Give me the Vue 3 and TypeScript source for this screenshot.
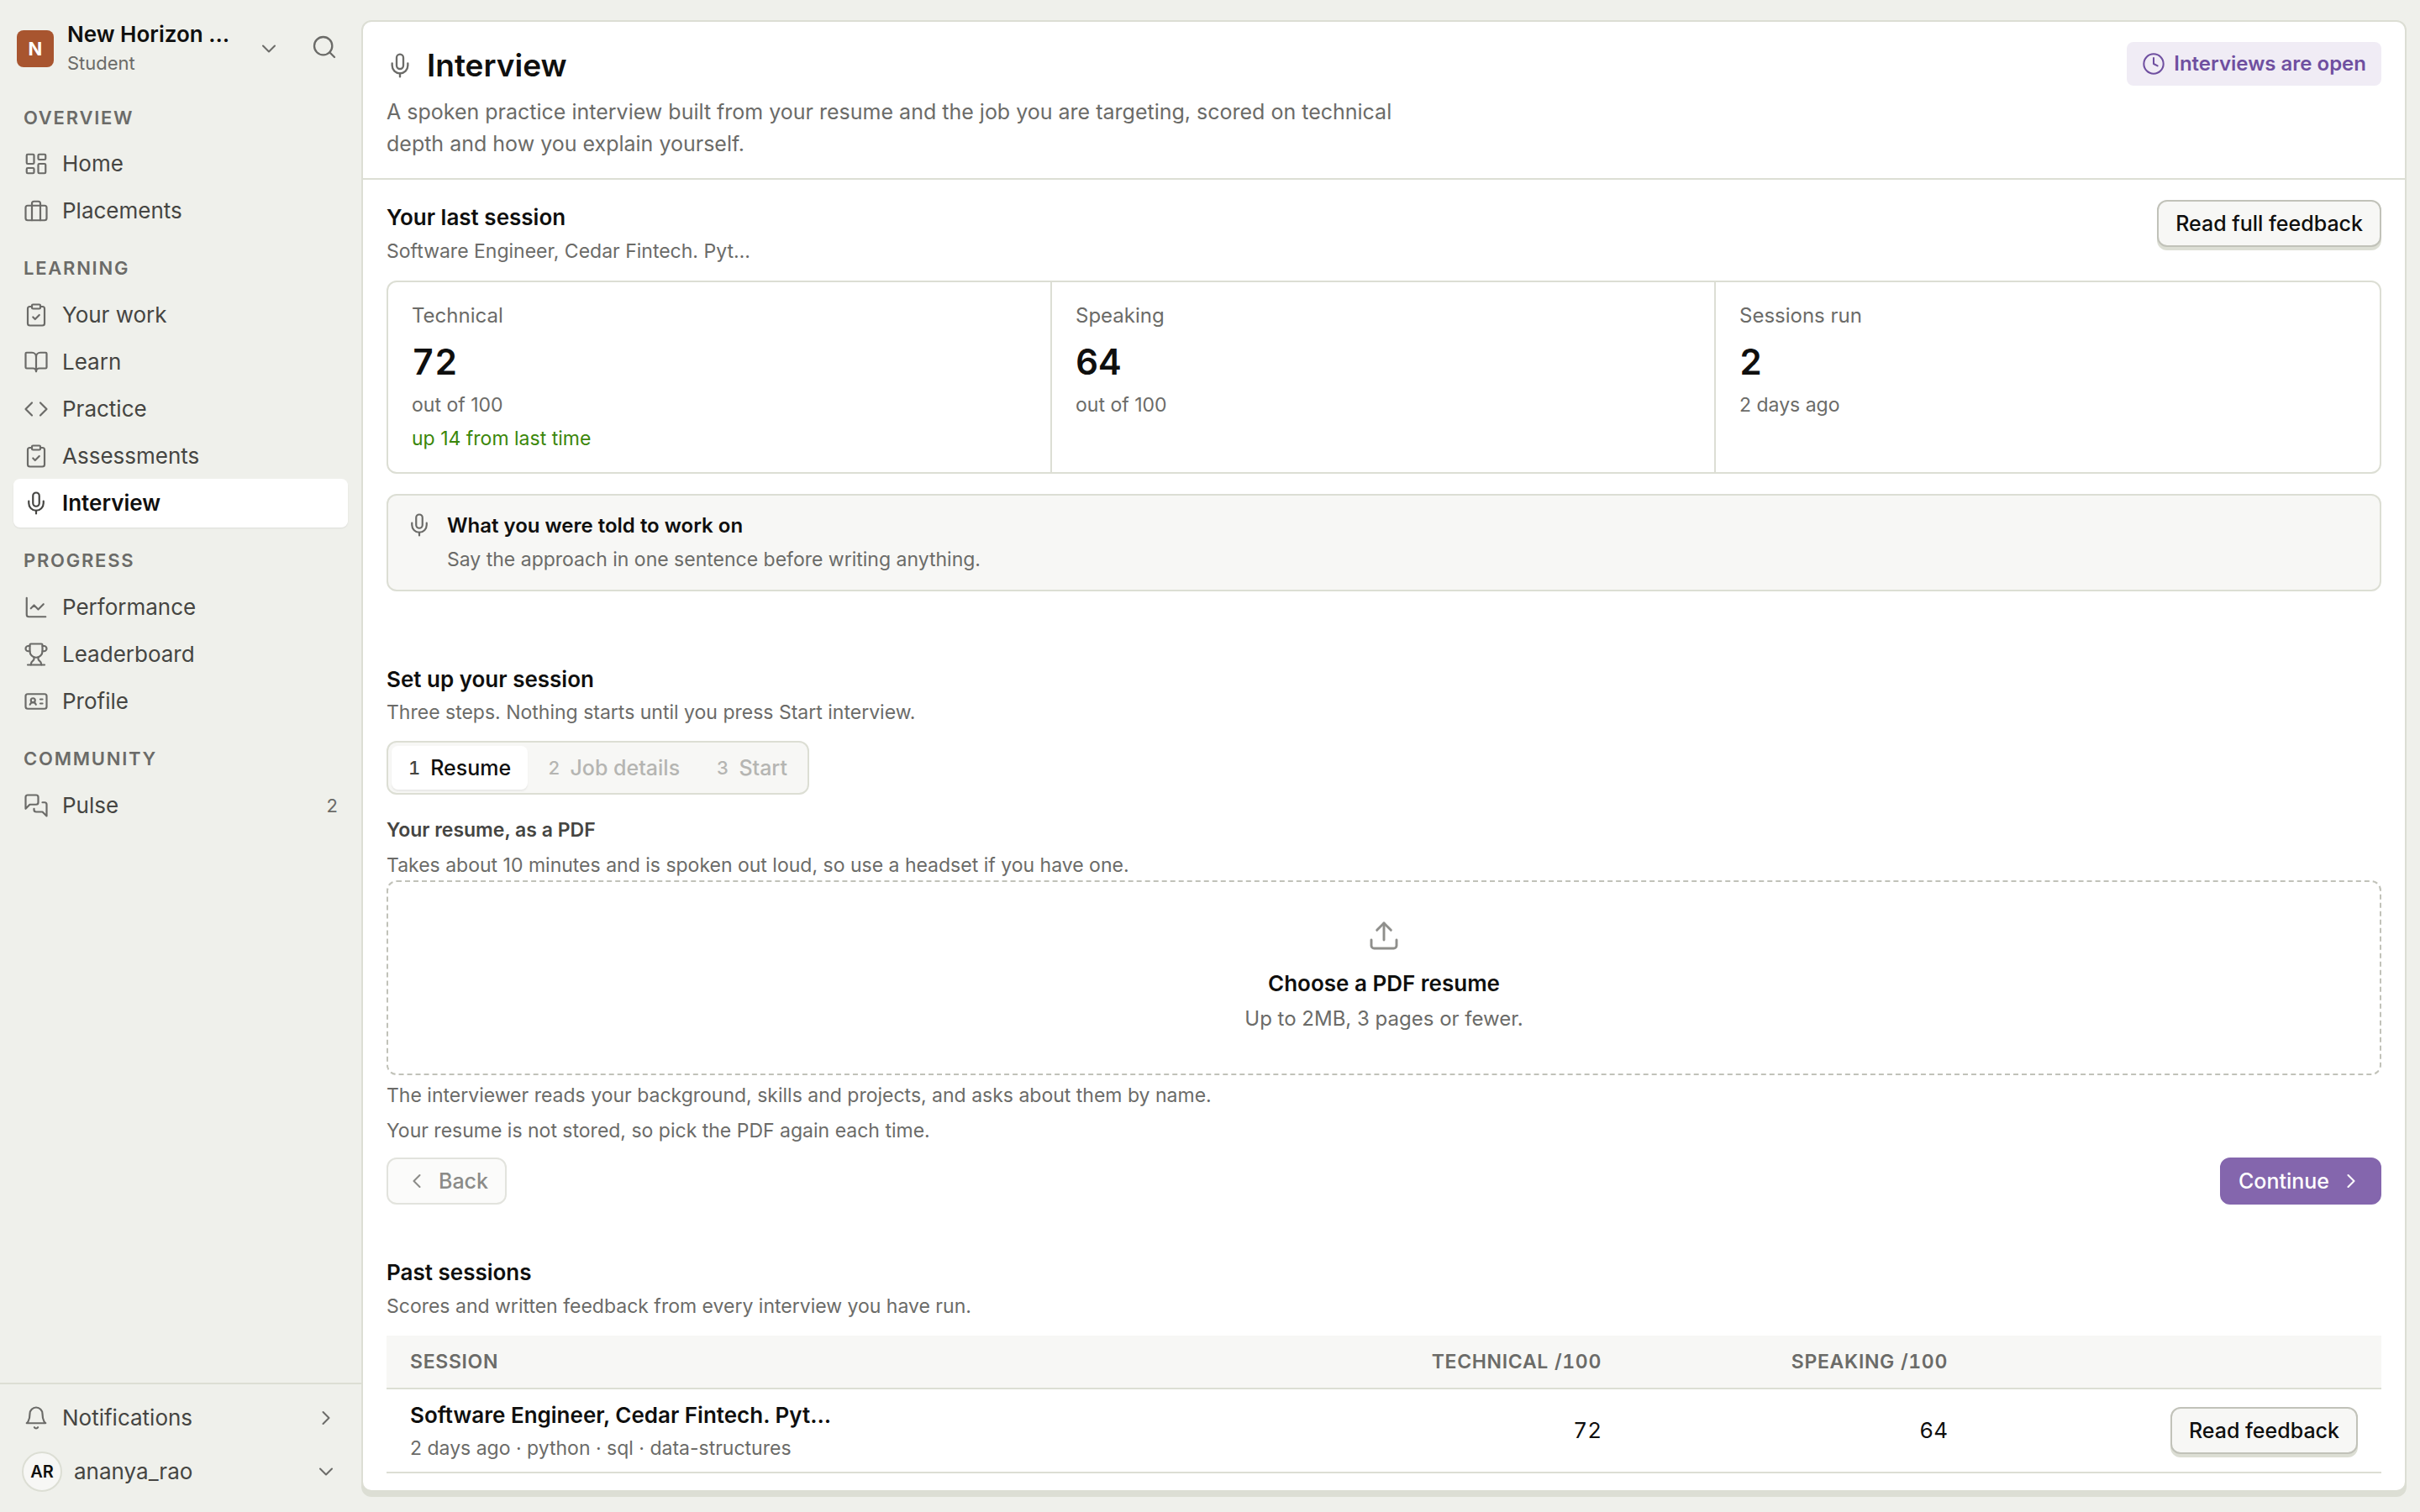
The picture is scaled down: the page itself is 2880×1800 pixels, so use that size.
<script setup lang="ts">
import { h, ref } from 'vue'
import type { FunctionalComponent } from 'vue'

type Shape = [tag: string, attrs: Record<string, string | number>]

const p = (d: string): Shape => ['path', { d }]
const r = (x: number, y: number, width: number, height: number, rx: number): Shape => [
  'rect',
  { x, y, width, height, rx },
]
const c = (cx: number, cy: number, radius: number): Shape => ['circle', { cx, cy, r: radius }]

const clipboard: Shape[] = [
  r(8, 2, 8, 4, 1),
  p('M16 4h2a2 2 0 0 1 2 2v14a2 2 0 0 1-2 2H6a2 2 0 0 1-2-2V6a2 2 0 0 1 2-2h2'),
  p('m9 14 2 2 4-4'),
]

const shapes: Record<string, Shape[]> = {
  home: [r(3, 3, 7, 9, 1), r(14, 3, 7, 5, 1), r(14, 12, 7, 9, 1), r(3, 16, 7, 5, 1)],
  briefcase: [
    r(2, 7, 20, 14, 2),
    p('M16 21V5a2 2 0 0 0-2-2h-4a2 2 0 0 0-2 2v16'),
  ],
  clipboard,
  book: [
    p('M12 7v14'),
    p('M3 18a1 1 0 0 1-1-1V4a1 1 0 0 1 1-1h5a4 4 0 0 1 4 4 4 4 0 0 1 4-4h5a1 1 0 0 1 1 1v13a1 1 0 0 1-1 1h-6a3 3 0 0 0-3 3 3 3 0 0 0-3-3z'),
  ],
  code: [p('m16 18 6-6-6-6'), p('m8 6-6 6 6 6')],
  mic: [p('M12 19v3'), p('M19 10v2a7 7 0 0 1-14 0v-2'), r(9, 2, 6, 13, 3)],
  chart: [p('M3 3v16a2 2 0 0 0 2 2h16'), p('m19 9-5 5-4-4-3 3')],
  trophy: [
    p('M10 14.66v1.626a2 2 0 0 1-.976 1.696A5 5 0 0 0 7 21.978'),
    p('M14 14.66v1.626a2 2 0 0 0 .976 1.696A5 5 0 0 1 17 21.978'),
    p('M18 9h1.5a1 1 0 0 0 0-5H18'),
    p('M4 22h16'),
    p('M6 9a6 6 0 0 0 12 0V3a1 1 0 0 0-1-1H7a1 1 0 0 0-1 1z'),
    p('M6 9H4.5a1 1 0 0 1 0-5H6'),
  ],
  card: [
    p('M16 10h2'),
    p('M16 14h2'),
    p('M6.17 15a3 3 0 0 1 5.66 0'),
    c(9, 11, 2),
    r(2, 5, 20, 14, 2),
  ],
  chat: [
    p('M14 9a2 2 0 0 1-2 2H6l-4 4V4a2 2 0 0 1 2-2h8a2 2 0 0 1 2 2z'),
    p('M18 9h2a2 2 0 0 1 2 2v11l-4-4h-6a2 2 0 0 1-2-2v-1'),
  ],
  bell: [p('M6 8a6 6 0 0 1 12 0c0 7 3 9 3 9H3s3-2 3-9'), p('M10.3 21a1.94 1.94 0 0 0 3.4 0')],
  clock: [c(12, 12, 10), p('M12 6v6l4 2')],
  search: [c(11, 11, 8), p('m21 21-4.3-4.3')],
  upload: [p('M12 3v12'), p('m17 8-5-5-5 5'), p('M21 15v4a2 2 0 0 1-2 2H5a2 2 0 0 1-2-2v-4')],
  down: [p('m6 9 6 6 6-6')],
  right: [p('m9 18 6-6-6-6')],
  left: [p('m15 18-6-6 6-6')],
}

const Icon: FunctionalComponent<{ name: string; size?: number }> = (props) =>
  h(
    'svg',
    {
      width: props.size ?? 30,
      height: props.size ?? 30,
      viewBox: '0 0 24 24',
      fill: 'none',
      stroke: 'currentColor',
      'stroke-width': 1.75,
      'stroke-linecap': 'round',
      'stroke-linejoin': 'round',
      'aria-hidden': 'true',
    },
    shapes[props.name].map(([tag, attrs]) => h(tag, attrs)),
  )
Icon.props = ['name', 'size']

interface NavItem {
  label: string
  icon: string
  count?: number
}

const groups: { title: string; items: NavItem[] }[] = [
  {
    title: 'Overview',
    items: [
      { label: 'Home', icon: 'home' },
      { label: 'Placements', icon: 'briefcase' },
    ],
  },
  {
    title: 'Learning',
    items: [
      { label: 'Your work', icon: 'clipboard' },
      { label: 'Learn', icon: 'book' },
      { label: 'Practice', icon: 'code' },
      { label: 'Assessments', icon: 'clipboard' },
      { label: 'Interview', icon: 'mic' },
    ],
  },
  {
    title: 'Progress',
    items: [
      { label: 'Performance', icon: 'chart' },
      { label: 'Leaderboard', icon: 'trophy' },
      { label: 'Profile', icon: 'card' },
    ],
  },
  { title: 'Community', items: [{ label: 'Pulse', icon: 'chat', count: 2 }] },
]
const current = ref('Interview')

const stats = [
  { label: 'Technical', value: 72, note: 'out of 100', change: 'up 14 from last time' },
  { label: 'Speaking', value: 64, note: 'out of 100' },
  { label: 'Sessions run', value: 2, note: '2 days ago' },
]

const steps = ['Resume', 'Job details', 'Start']
const step = ref(0)

const sessions = [
  {
    title: 'Software Engineer, Cedar Fintech. Pyt…',
    meta: '2 days ago · python · sql · data-structures',
    technical: 72,
    speaking: 64,
  },
]
</script>

<template>
  <div class="app">
    <aside class="sidebar">
      <div class="org">
        <button type="button" class="org-switch">
          <span class="org-logo">N</span>
          <span class="org-text">
            <span class="org-name">New Horizon …</span>
            <span class="org-role">Student</span>
          </span>
          <Icon name="down" :size="28" />
        </button>
        <button type="button" class="search" aria-label="Search">
          <Icon name="search" :size="32" />
        </button>
      </div>

      <nav class="nav">
        <section v-for="group in groups" :key="group.title">
          <h2 class="nav-title">{{ group.title }}</h2>
          <a
            v-for="item in group.items"
            :key="item.label"
            href="#"
            class="nav-item"
            :class="{ active: item.label === current }"
            @click.prevent="current = item.label"
          >
            <Icon :name="item.icon" />
            <span class="grow">{{ item.label }}</span>
            <span v-if="item.count" class="count">{{ item.count }}</span>
          </a>
        </section>
      </nav>

      <div class="side-foot">
        <button type="button" class="nav-item">
          <Icon name="bell" />
          <span class="grow">Notifications</span>
          <Icon name="right" :size="28" />
        </button>
        <button type="button" class="nav-item user">
          <span class="avatar">AR</span>
          <span class="grow">ananya_rao</span>
          <Icon name="down" :size="28" />
        </button>
      </div>
    </aside>

    <main class="panel">
      <header class="page-head">
        <div>
          <div class="title-row">
            <Icon name="mic" :size="32" />
            <h1>Interview</h1>
          </div>
          <p class="lead">
            A spoken practice interview built from your resume and the job you are targeting, scored
            on technical depth and how you explain yourself.
          </p>
        </div>
        <span class="badge"><Icon name="clock" :size="28" />Interviews are open</span>
      </header>

      <div class="content">
        <section>
          <div class="section-head">
            <div class="heading">
              <h2>Your last session</h2>
              <p>Software Engineer, Cedar Fintech. Pyt…</p>
            </div>
            <button type="button" class="btn raised">Read full feedback</button>
          </div>
          <div class="stats">
            <div v-for="stat in stats" :key="stat.label" class="stat">
              <span class="stat-label">{{ stat.label }}</span>
              <strong>{{ stat.value }}</strong>
              <span class="note">{{ stat.note }}</span>
              <span v-if="stat.change" class="note change">{{ stat.change }}</span>
            </div>
          </div>
          <div class="callout">
            <Icon name="mic" />
            <div class="callout-text">
              <strong>What you were told to work on</strong>
              <span class="note">Say the approach in one sentence before writing anything.</span>
            </div>
          </div>
        </section>

        <section class="setup">
          <div class="heading tight">
            <h2>Set up your session</h2>
            <p>Three steps. Nothing starts until you press Start interview.</p>
          </div>
          <div class="steps">
            <button
              v-for="(name, i) in steps"
              :key="name"
              type="button"
              class="step"
              :class="{ active: i === step }"
              :disabled="i > step"
            >
              <span class="num">{{ i + 1 }}</span>{{ name }}
            </button>
          </div>
          <div class="field">
            <label for="resume" class="field-label">Your resume, as a PDF</label>
            <p class="note">
              Takes about 10 minutes and is spoken out loud, so use a headset if you have one.
            </p>
          </div>
          <label class="drop">
            <input id="resume" type="file" accept="application/pdf" />
            <Icon name="upload" :size="40" />
            <strong>Choose a PDF resume</strong>
            <span>Up to 2MB, 3 pages or fewer.</span>
          </label>
          <div class="after">
            <p class="note">
              The interviewer reads your background, skills and projects, and asks about them by
              name.
            </p>
            <p class="note">Your resume is not stored, so pick the PDF again each time.</p>
          </div>
          <div class="actions">
            <button type="button" class="btn back" disabled>
              <Icon name="left" :size="28" />Back
            </button>
            <button type="button" class="btn primary">
              Continue<Icon name="right" :size="28" />
            </button>
          </div>
        </section>

        <section class="past">
          <div class="heading">
            <h2>Past sessions</h2>
            <p>Scores and written feedback from every interview you have run.</p>
          </div>
          <table>
            <thead>
              <tr>
                <th scope="col">Session</th>
                <th scope="col" class="col-num">Technical /100</th>
                <th scope="col" class="col-num">Speaking /100</th>
                <th scope="col" class="col-action" aria-label="Actions"></th>
              </tr>
            </thead>
            <tbody>
              <tr v-for="session in sessions" :key="session.title">
                <td>
                  <strong class="session-title">{{ session.title }}</strong>
                  <span class="note session-meta">{{ session.meta }}</span>
                </td>
                <td class="col-num">{{ session.technical }}</td>
                <td class="col-num">{{ session.speaking }}</td>
                <td class="col-action">
                  <button type="button" class="btn raised">Read feedback</button>
                </td>
              </tr>
            </tbody>
          </table>
        </section>
      </div>
    </main>
  </div>
</template>

<style>
body {
  margin: 0;
  background: #eff0eb;
}
</style>

<style scoped>
.app {
  --line: #dcded4;
  --ink: #0f0f0e;
  --body: #454542;
  --muted: #6b6b68;
  --soft: #f7f7f5;
  display: grid;
  grid-template-columns: 430px minmax(0, 1fr);
  min-height: 100vh;
  font-family: Inter, 'Liberation Sans', sans-serif;
  font-size: 24px;
  line-height: 36px;
  color: var(--ink);
}

.app,
.app * {
  box-sizing: border-box;
}

svg {
  display: block;
  flex: none;
}

h1,
h2,
p {
  margin: 0;
}

strong {
  font-weight: 600;
}

button {
  margin: 0;
  padding: 0;
  border: 0;
  background: none;
  font: inherit;
  color: inherit;
  text-align: left;
}

.grow {
  flex: 1;
}

.note {
  font-size: 23px;
  color: var(--muted);
}

/* Sidebar */
.sidebar {
  display: flex;
  flex-direction: column;
}

.org {
  display: flex;
  align-items: flex-start;
  gap: 36px;
  padding: 24px 28px 8px 20px;
  color: var(--muted);
}

.org-switch {
  display: flex;
  flex: 1;
  align-items: center;
  gap: 16px;
}

.org-logo {
  display: grid;
  place-items: center;
  width: 44px;
  height: 44px;
  border-radius: 8px;
  background: #a8552f;
  color: #fff;
  font-size: 22px;
  font-weight: 700;
}

.org-text {
  display: flex;
  flex: 1;
  flex-direction: column;
}

.org-name {
  font-size: 26px;
  font-weight: 600;
  line-height: 34px;
  color: var(--ink);
}

.org-role {
  font-size: 22px;
  line-height: 34px;
}

.search {
  padding: 16px 0;
}

.nav {
  flex: 1;
  padding: 0 16px;
}

.nav-title {
  padding: 24px 12px 11px;
  font-size: 22px;
  font-weight: 600;
  line-height: 32px;
  letter-spacing: 0.08em;
  text-transform: uppercase;
  color: var(--muted);
}

.nav section + section .nav-title {
  padding-bottom: 12px;
}

.nav-item {
  display: flex;
  align-items: center;
  gap: 16px;
  width: 100%;
  height: 56px;
  padding: 0 12px;
  border-radius: 8px;
  font-size: 26px;
  color: var(--body);
  text-decoration: none;
}

.nav-item svg,
.count {
  color: var(--muted);
}

.nav-item.active {
  background: #fff;
  box-shadow: 0 -1px 0 #fff, 0 1px 0 #fff, 0 2px 2px rgb(0 0 0 / 8%);
  color: var(--ink);
  font-weight: 600;
}

.nav-item.active svg {
  color: var(--body);
}

.count {
  font-size: 22px;
}

.side-foot {
  display: flex;
  flex-direction: column;
  gap: 4px;
  padding: 12px 16px 16px;
  border-top: 2px solid var(--line);
}

.user {
  gap: 14px;
  height: 64px;
  padding-left: 10px;
}

.avatar {
  display: grid;
  place-items: center;
  width: 48px;
  height: 48px;
  border: 2px solid var(--line);
  border-radius: 50%;
  background: var(--soft);
  color: var(--ink);
  font-size: 20px;
  font-weight: 600;
}

/* Main panel */
.panel {
  margin: 24px 16px 24px 0;
  border: 2px solid var(--line);
  border-radius: 12px;
  background: #fff;
  box-shadow: 0 6px 0 var(--line);
}

.page-head {
  display: flex;
  justify-content: space-between;
  align-items: flex-start;
  padding: 24px 28px 22px;
  border-bottom: 2px solid var(--line);
}

.title-row {
  display: flex;
  align-items: center;
  gap: 16px;
  margin-bottom: 8px;
  color: var(--muted);
}

h1 {
  font-size: 37px;
  font-weight: 600;
  line-height: 56px;
  color: var(--ink);
}

.lead {
  max-width: 1240px;
  font-size: 25px;
  line-height: 38px;
  color: var(--muted);
}

.badge {
  display: flex;
  align-items: center;
  gap: 10px;
  height: 52px;
  padding: 0 18px;
  border-radius: 8px;
  background: #f0ecf5;
  color: #6f4fa0;
  font-weight: 600;
}

.content {
  padding: 24px 28px 20px;
}

.section-head {
  display: flex;
  justify-content: space-between;
  align-items: flex-start;
}

.heading {
  margin-bottom: 16px;
}

.heading h2 {
  font-size: 26px;
  font-weight: 600;
  line-height: 42px;
}

.heading p {
  font-size: 23px;
  line-height: 38px;
  color: var(--muted);
}

.heading.tight p {
  line-height: 36px;
}

.btn {
  display: inline-flex;
  align-items: center;
  gap: 12px;
  height: 56px;
  padding: 0 20px;
  border: 2px solid transparent;
  border-radius: 12px;
  font-size: 25px;
  font-weight: 500;
  white-space: nowrap;
}

.raised {
  border-color: #c1c2b9;
  background: var(--soft);
  box-shadow: 0 4px 0 var(--line);
}

.back {
  border-color: #e2e3dd;
  background: #fbfbfa;
  color: #8b8b88;
}

.primary {
  border-color: #8466ad;
  background: #8466ad;
  color: #fff;
}

.stats {
  display: grid;
  grid-template-columns: repeat(3, 1fr);
  border: 2px solid var(--line);
  border-radius: 12px;
}

.stat {
  display: flex;
  flex-direction: column;
  gap: 4px;
  padding: 22px 28px;
}

.stat:not(:last-child) {
  border-right: 2px solid var(--line);
}

.stat-label {
  color: var(--muted);
}

.stat strong {
  padding-top: 4px;
  font-size: 42px;
  line-height: 58px;
  font-variant-numeric: tabular-nums;
}

.change {
  color: #3b870a;
}

.callout {
  display: flex;
  gap: 18px;
  margin-top: 24px;
  padding: 18px 22px;
  border: 2px solid var(--line);
  border-radius: 12px;
  background: var(--soft);
  color: var(--muted);
}

.callout svg {
  margin-top: 2px;
}

.callout-text {
  display: flex;
  flex-direction: column;
  gap: 4px;
}

.callout strong {
  color: var(--ink);
}

.setup {
  margin-top: 84px;
}

.steps {
  display: inline-flex;
  gap: 4px;
  padding: 4px;
  border: 2px solid var(--line);
  border-radius: 12px;
  background: var(--soft);
  vertical-align: top;
}

.step {
  display: flex;
  align-items: center;
  gap: 12px;
  height: 52px;
  padding: 0 20px;
  border-radius: 8px;
  font-size: 25px;
  font-weight: 500;
  color: #b5b5b2;
}

.step.active {
  background: #fff;
  box-shadow: 0 2px 2px rgb(0 0 0 / 6%);
  color: var(--ink);
}

.num {
  font-size: 22px;
  font-variant-numeric: tabular-nums;
}

.step.active .num {
  color: var(--body);
}

.field {
  display: flex;
  flex-direction: column;
  gap: 6px;
  margin-top: 24px;
}

.field-label {
  font-size: 23px;
  font-weight: 600;
  color: var(--body);
}

.drop {
  position: relative;
  display: flex;
  flex-direction: column;
  align-items: center;
  padding: 44px 28px;
  border: 2px dashed #c1c2b9;
  border-radius: 12px;
  color: var(--muted);
}

.drop input {
  position: absolute;
  inset: 0;
  width: 100%;
  opacity: 0;
}

.drop svg {
  margin-bottom: 16px;
  color: #8f8f8c;
}

.drop strong {
  font-size: 26px;
  line-height: 42px;
  color: var(--ink);
}

.drop span {
  line-height: 42px;
}

.after {
  display: flex;
  flex-direction: column;
  gap: 6px;
  padding: 6px 0 14px;
}

.actions {
  display: flex;
  justify-content: space-between;
}

.past {
  margin-top: 60px;
}

table {
  width: 100%;
  border-collapse: separate;
  border-spacing: 0;
  table-layout: fixed;
}

th,
td {
  padding: 10px 28px;
  border-bottom: 2px solid var(--line);
  text-align: left;
}

th {
  padding: 14px 28px;
  background: var(--soft);
  font-size: 23px;
  font-weight: 600;
  line-height: 34px;
  letter-spacing: 0.03em;
  text-transform: uppercase;
  color: var(--muted);
}

.col-num {
  width: 412px;
  text-align: right;
  font-variant-numeric: tabular-nums;
}

td.col-num {
  font-size: 26px;
}

.col-action {
  width: 488px;
  text-align: right;
}

.col-action .btn {
  vertical-align: middle;
}

.session-title,
.session-meta {
  display: block;
}

.session-title {
  font-size: 26px;
  line-height: 42px;
}
</style>
